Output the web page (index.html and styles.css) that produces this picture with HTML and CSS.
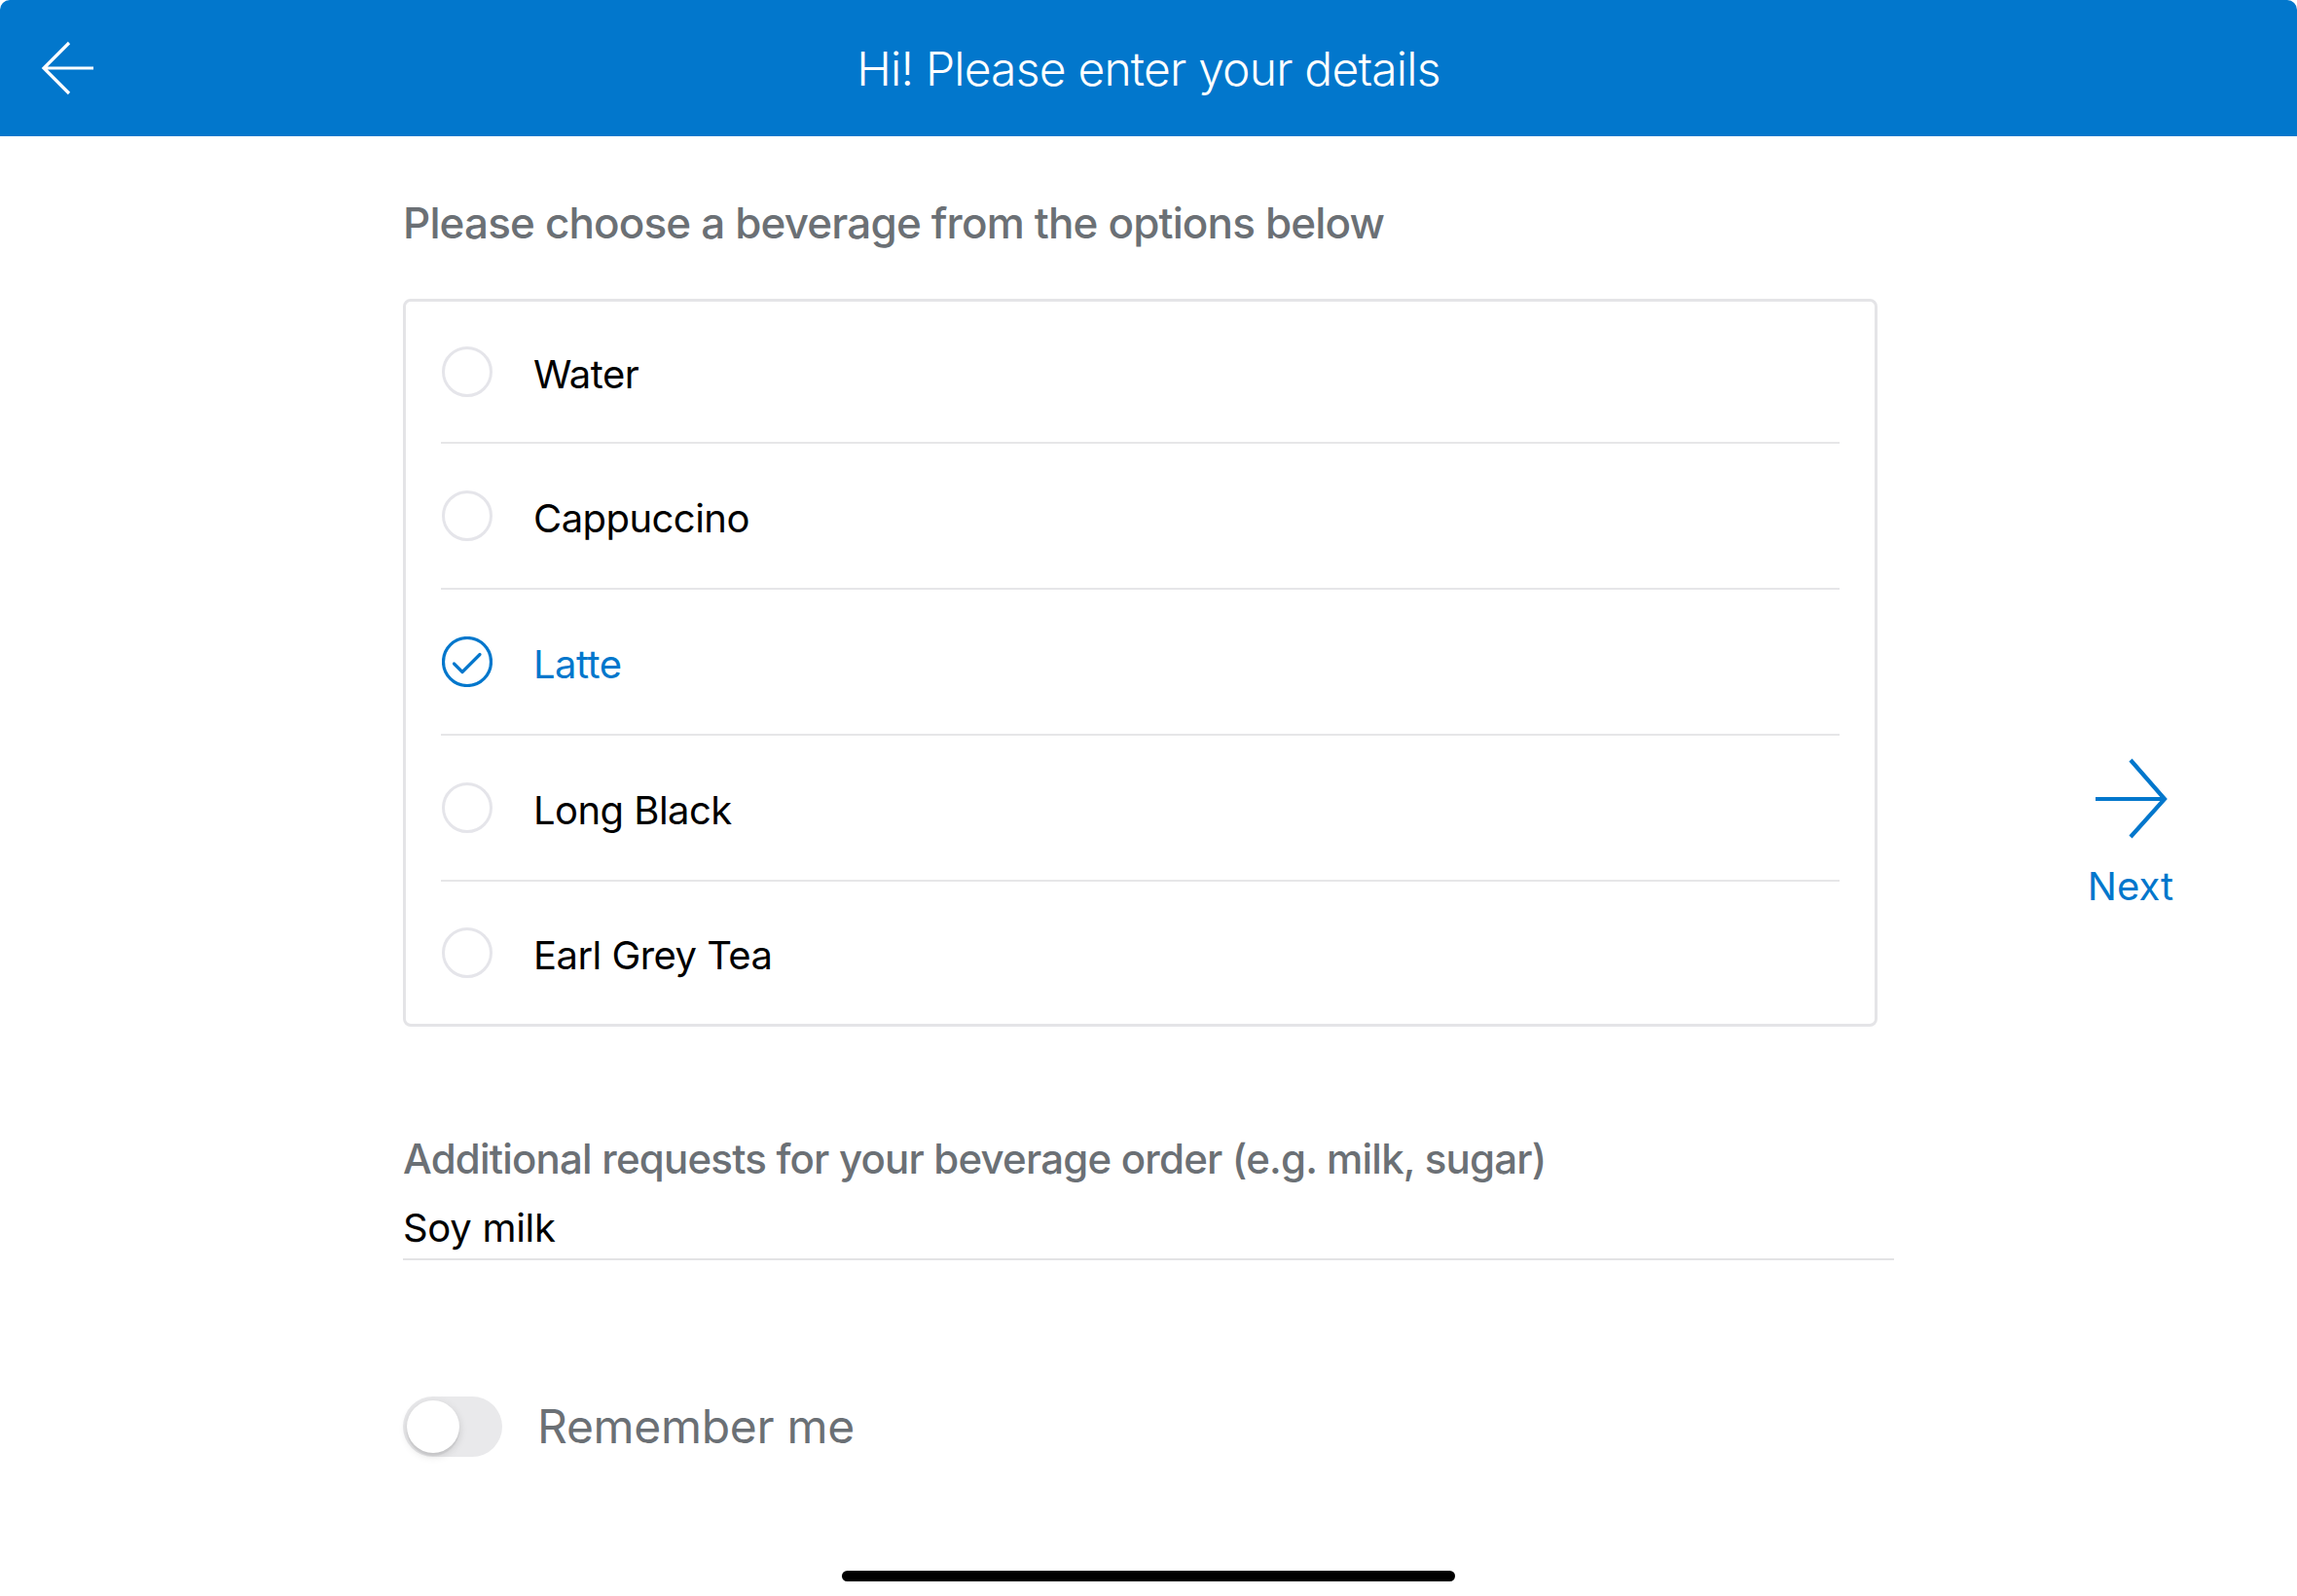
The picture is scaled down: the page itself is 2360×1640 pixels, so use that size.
FILE: index.html
```html
<!DOCTYPE html>
<html lang="en">
<head>
<meta charset="utf-8">
<title>Beverage details</title>
<link rel="stylesheet" href="styles.css">
</head>
<body>
<div class="screen">
  <header class="topbar">
    <button class="back" aria-label="Back">
      <svg class="back-icon" viewBox="0 0 60 60" width="60" height="60">
        <path d="M31 4 L5 30 L31 56 M5 30 H56" fill="none" stroke="#fff" stroke-width="3.2"/>
      </svg>
    </button>
    <h1 class="title">Hi! Please enter your details</h1>
    <div class="spacer"></div>
  </header>

  <div class="content">
    <main class="form">
      <h2 class="question">Please choose a beverage from the options below</h2>
      <div class="card">
        <ul class="options">
          <li class="option"><span class="radio"></span><span class="opt-label">Water</span></li>
          <li class="option"><span class="radio"></span><span class="opt-label">Cappuccino</span></li>
          <li class="option is-selected">
            <svg class="radio-checked" viewBox="0 0 52 52" width="52" height="52">
              <circle cx="26" cy="26" r="24.5" fill="none" stroke="#0277cc" stroke-width="3.2"/>
              <path d="M12.5 28 L21 36.5 L39 18.5" fill="none" stroke="#0277cc" stroke-width="3.2" stroke-linecap="round" stroke-linejoin="round"/>
            </svg>
            <span class="opt-label">Latte</span>
          </li>
          <li class="option"><span class="radio"></span><span class="opt-label">Long Black</span></li>
          <li class="option"><span class="radio"></span><span class="opt-label">Earl Grey Tea</span></li>
        </ul>
      </div>

      <label class="field-label">Additional requests for your beverage order (e.g. milk, sugar)</label>
      <div class="field-value">Soy milk</div>

      <div class="remember">
        <span class="toggle"><span class="knob"></span></span>
        <span class="remember-label">Remember me</span>
      </div>
    </main>

    <button class="next">
      <svg class="next-icon" viewBox="0 0 80 86" width="80" height="86">
        <path d="M40 3 L75 43 L40 82 M4 43 H75" fill="none" stroke="#0277cc" stroke-width="4.2"/>
      </svg>
      <span class="next-label">Next</span>
    </button>
  </div>

  <div class="home-bar"><span class="home-indicator"></span></div>
</div>
</body>
</html>
```

FILE: styles.css
```css
* { box-sizing: border-box; }

html, body {
  margin: 0;
  padding: 0;
  background: #ffffff;
}

body {
  font-family: Inter, "Noto Sans", "Liberation Sans", sans-serif;
  -webkit-font-smoothing: antialiased;
}

.screen {
  width: 2360px;
  height: 1640px;
  display: flex;
  flex-direction: column;
  overflow: hidden;
  border-radius: 10px 10px 0 0;
  background: #ffffff;
}

.topbar {
  height: 140px;
  flex: 0 0 140px;
  background: #0277cc;
  display: grid;
  grid-template-columns: 140px 1fr 140px;
  align-items: center;
}

.back {
  width: 140px;
  height: 140px;
  border: 0;
  padding: 0;
  background: transparent;
  display: flex;
  align-items: center;
  justify-content: center;
}

.back-icon { display: block; }

.title {
  margin: 2px 0 0;
  text-align: center;
  color: #ffffff;
  font-weight: 300;
  font-size: 48px;
  line-height: 60px;
  letter-spacing: -0.8px;
}

.content {
  flex: 1 1 auto;
  display: flex;
  padding-left: 414px;
}

.form {
  width: 1532px;
  display: flex;
  flex-direction: column;
}

.question {
  margin: 61px 0 0;
  font-size: 44px;
  line-height: 56px;
  font-weight: 500;
  color: #6b7075;
  letter-spacing: -0.85px;
}

.card {
  margin-top: 50px;
  width: 1515px;
  border: 3px solid #e4e4e7;
  border-radius: 8px;
}

.options {
  list-style: none;
  margin: 0 36px;
  padding: 0;
}

.option {
  height: 150px;
  display: flex;
  align-items: center;
  padding-left: 1px;
  border-bottom: 2px solid #e6e6e8;
}

.option:first-child { height: 146px; }
.option:last-child { height: 146px; border-bottom: 0; }

.radio {
  width: 52px;
  height: 52px;
  border-radius: 50%;
  border: 3px solid #e5e5ea;
  flex: 0 0 52px;
}

.radio-checked {
  display: block;
  flex: 0 0 52px;
}

.opt-label {
  margin-left: 42px;
  padding-top: 6px;
  font-size: 40px;
  line-height: 48px;
  color: #000000;
  letter-spacing: -0.55px;
}

.is-selected .opt-label { color: #0277cc; }

.field-label {
  margin-top: 109px;
  font-size: 42px;
  line-height: 54px;
  font-weight: 500;
  color: #6b7075;
  letter-spacing: -0.8px;
}

.field-value {
  margin-top: 19px;
  font-size: 40px;
  line-height: 50px;
  color: #000000;
  padding-bottom: 6px;
  border-bottom: 2px solid #e3e3e5;
  letter-spacing: -0.3px;
}

.remember {
  margin-top: 140px;
  display: flex;
  align-items: center;
}

.toggle {
  width: 102px;
  height: 62px;
  border-radius: 31px;
  background: #e9e9eb;
  padding: 4px;
  display: flex;
  align-items: center;
}

.knob {
  width: 54px;
  height: 54px;
  border-radius: 50%;
  background: #ffffff;
  box-shadow: 0 3px 8px rgba(0, 0, 0, 0.15), 0 3px 1px rgba(0, 0, 0, 0.06);
}

.remember-label {
  margin-left: 36px;
  font-size: 48px;
  line-height: 60px;
  color: #6b7075;
  letter-spacing: -0.3px;
}

.next {
  align-self: flex-start;
  margin-top: 638px;
  margin-left: 173px;
  width: 140px;
  border: 0;
  padding: 0;
  background: transparent;
  display: flex;
  flex-direction: column;
  align-items: center;
  font-family: inherit;
}

.next-icon { display: block; }

.next-label {
  margin-top: 23px;
  font-size: 40px;
  line-height: 48px;
  color: #0277cc;
}

.home-bar {
  flex: 0 0 auto;
  height: 26px;
  display: flex;
  justify-content: center;
}

.home-indicator {
  width: 630px;
  height: 11px;
  border-radius: 6px;
  background: #000000;
}
```
